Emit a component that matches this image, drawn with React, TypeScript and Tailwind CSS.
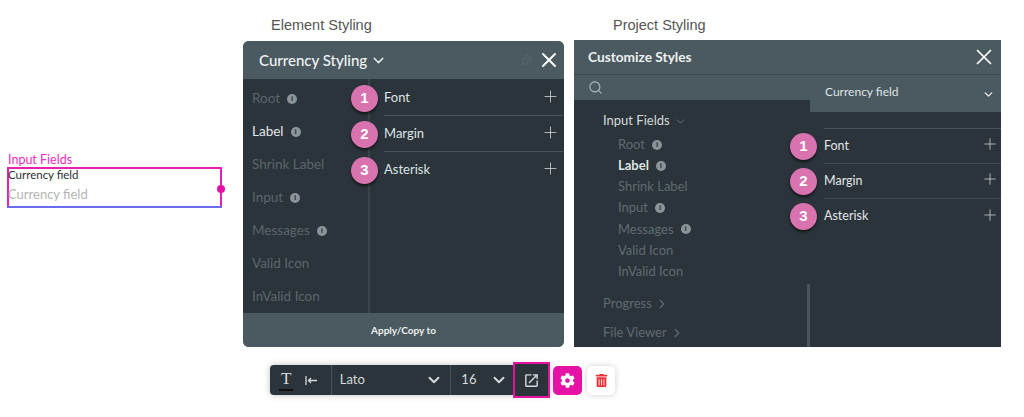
import { ChevronDown, ChevronRight, Plus, Search, X, Pin } from "lucide-react";
import { FaCog, FaTrashAlt } from "react-icons/fa";
import { MdOpenInNew } from "react-icons/md";

const lato = "font-['Lato','Noto_Sans',sans-serif]";

function Info() {
  return (
    <span className="ml-[7px] inline-flex h-[10px] w-[10px] items-center justify-center rounded-full bg-[#8a9499] font-['Liberation_Sans',sans-serif] text-[8px] font-bold leading-none text-[#2a343a]">
      i
    </span>
  );
}

function Badge({ n }: { n: number }) {
  return (
    <span className="flex h-[27px] w-[27px] shrink-0 items-center justify-center rounded-full bg-[#d873b0] font-['Liberation_Sans',sans-serif] text-[15px] font-bold text-white shadow-[0_2px_3px_rgba(0,0,0,0.6)]">
      {n}
    </span>
  );
}

function StyleRow({ n, label, border }: { n: number; label: string; border: boolean }) {
  return (
    <div className="flex h-[36px] items-center">
      <div className="z-10 -ml-[33px] mr-[6px]">
        <Badge n={n} />
      </div>
      <div className={`flex h-full flex-1 items-center justify-between pr-[4px] text-[13px] text-[#dfe3e5] ${border ? "border-b border-[#47545a]" : ""}`}>
        <span>{label}</span>
        <Plus size={19} strokeWidth={1} className="-mt-[3px] text-[#d5dadc]" />
      </div>
    </div>
  );
}

const sections = [
  { name: "Root", info: true },
  { name: "Label", info: true, active: true },
  { name: "Shrink Label" },
  { name: "Input", info: true },
  { name: "Messages", info: true },
  { name: "Valid Icon" },
  { name: "InValid Icon" },
];

function ElementPanel() {
  return (
    <div className="flex h-[306px] w-[321px] flex-col overflow-hidden rounded-[6px] bg-[#2a343a]">
      <div className="flex h-[38px] shrink-0 items-center bg-[#4a5a60] pl-[16px] pr-[3px] text-white">
        <span className="text-[15px] font-medium text-[#f2f4f5]">Currency Styling</span>
        <ChevronDown size={17} strokeWidth={2} className="ml-[3px] text-[#e6e9ea]" />
        <Pin size={13} strokeWidth={1.2} className="ml-auto mr-[5px] rotate-45 text-[#66757b]" />
        <X size={24} strokeWidth={2} className="text-white" />
      </div>
      <div className="flex flex-1">
        <div className="flex w-[127px] flex-col border-r-2 border-[#38444a] pl-[9px] pt-[3px]">
          {sections.map((item) => (
            <div
              key={item.name}
              className={`flex h-[33px] items-center text-[13.5px] ${item.active ? "text-[#e3e6e8]" : "text-[#5a666c]"}`}
            >
              {item.name}
              {item.info && <Info />}
            </div>
          ))}
        </div>
        <div className="flex-1 pl-[14px] pt-[1px]">
          <StyleRow n={1} label="Font" border />
          <StyleRow n={2} label="Margin" border />
          <StyleRow n={3} label="Asterisk" border={false} />
        </div>
      </div>
      <div className="flex h-[34px] shrink-0 items-center justify-center bg-[#4a5a60] text-[10px] font-bold text-[#eef0f1]">
        Apply/Copy to
      </div>
    </div>
  );
}

function ProjectRow({ n, label, last }: { n: number; label: string; last?: boolean }) {
  return (
    <div className="flex h-[35px] items-center">
      <div className="z-10 -ml-[34px] mr-[7px]">
        <Badge n={n} />
      </div>
      <div className={`flex h-full flex-1 items-center justify-between pr-[2px] text-[12.5px] text-[#e3e6e8] ${last ? "" : "border-b border-[#3f4b51]"}`}>
        <span>{label}</span>
        <Plus size={18} strokeWidth={1} className="-mt-[4px] text-[#d5dadc]" />
      </div>
    </div>
  );
}

function ProjectPanel() {
  return (
    <div className="flex h-[307px] w-[427px] flex-col overflow-hidden bg-[#2a343a]">
      <div className="flex h-[35px] shrink-0 items-center justify-between border-b border-[#3d4a50] bg-[#4a5a60] pl-[14px] pr-[4px]">
        <span className="text-[13.7px] font-bold text-[#eef0f1]">Customize Styles</span>
        <X size={26} strokeWidth={1.6} className="text-white" />
      </div>
      <div className="flex flex-1">
        <div className="flex w-[236px] flex-col">
          <div className="flex h-[25px] shrink-0 items-center bg-[#4a5a60] pl-[14px]">
            <Search size={15} strokeWidth={1.7} className="text-[#b4bcc0]" />
          </div>
          <div className="flex flex-1">
            <div className="flex-1 pl-[29px] pt-[10px]">
              <div className="flex h-[22px] items-center text-[13px] text-[#d4d9db]">
                Input Fields
                <ChevronDown size={13} strokeWidth={1.2} className="ml-[4px] text-[#8b969a]" />
              </div>
              <div className="pl-[15px] pt-[2px]">
                {sections.map((item) => (
                  <div
                    key={item.name}
                    className={`flex h-[21.2px] items-center text-[13px] ${item.active ? "font-bold text-[#dfe3e5]" : "text-[#5f6b71]"}`}
                  >
                    {item.name}
                    {item.info && <Info />}
                  </div>
                ))}
              </div>
              <div className="mt-[7px] flex h-[29px] items-center text-[13px] text-[#5f6b71]">
                Progress
                <ChevronRight size={14} strokeWidth={2.2} className="ml-[3px]" />
              </div>
              <div className="flex h-[29px] items-center text-[13px] text-[#5f6b71]">
                File Viewer
                <ChevronRight size={14} strokeWidth={2.2} className="ml-[3px]" />
              </div>
            </div>
            <div className="flex w-[3px] flex-col justify-end">
              <div className="h-[63px] w-[3px] bg-[#47545a]" />
            </div>
          </div>
        </div>
        <div className="flex flex-1 flex-col">
          <div className="flex h-[37px] shrink-0 items-center justify-between bg-[#4a5a60] pb-[3px] pl-[15px] pr-[6px] text-[12px] text-[#dfe3e5]">
            Currency field
            <ChevronDown size={13} strokeWidth={2.6} className="mt-[4px] text-[#e6e9ea]" />
          </div>
          <div className="ml-[14px] mt-[16px] border-t border-[#47545a]">
            <ProjectRow n={1} label="Font" />
            <ProjectRow n={2} label="Margin" />
            <ProjectRow n={3} label="Asterisk" last />
          </div>
        </div>
      </div>
    </div>
  );
}

function Toolbar() {
  return (
    <div className="flex w-max items-center">
      <div className="flex h-[30px] w-[280px] items-center rounded-[4px] bg-[#2a343a] text-[#d5dadc] shadow-[0_0_6px_rgba(0,0,0,0.25)]">
        <div className="flex h-full w-[62px] items-center border-r border-[#47545a] pl-[9px]">
          <span className="border-b-2 border-[#111] px-[2px] font-['Liberation_Serif',serif] text-[17px] leading-[20px] text-[#d5dadc]">T</span>
          <svg width="13" height="11" viewBox="0 0 13 11" className="ml-[12px]" fill="none" stroke="#d5dadc" strokeWidth="1.3">
            <path d="M1 1v9M12 5.5H3.5M6 3 3.5 5.5 6 8" />
          </svg>
        </div>
        <div className="flex h-full w-[120px] items-center justify-between border-r border-[#47545a] pl-[8px] pr-[7px] text-[13px]">
          Lato
          <ChevronDown size={18} strokeWidth={2.6} />
        </div>
        <div className="flex h-full w-[62px] items-center justify-between pl-[10px] pr-[5px] text-[13px]">
          16
          <ChevronDown size={18} strokeWidth={2.6} />
        </div>
        <div className="flex h-[36px] w-[37px] items-center justify-center border-[2px] border-[#e5139f] bg-[#2a343a]">
          <MdOpenInNew size={17} />
        </div>
      </div>
      <div className="ml-[3px] flex h-[29px] w-[29px] items-center justify-center rounded-[5px] bg-[#e512a5]">
        <FaCog size={15} className="text-white" />
      </div>
      <div className="ml-[5px] flex h-[29px] w-[28px] items-center justify-center rounded-[5px] bg-white shadow-[0_0_6px_rgba(0,0,0,0.2)]">
        <FaTrashAlt size={13} className="text-[#e8343a]" />
      </div>
    </div>
  );
}

export default function App() {
  return (
    <div className={`flex h-[417px] w-[1024px] overflow-hidden bg-white ${lato}`}>
      <div className="w-[243px] shrink-0 pl-[7px] pt-[153px]">
        <div className="pl-[1px] text-[12.5px] leading-[14px] text-[#f02cc0]">Input Fields</div>
        <div className="relative h-[41px] w-[215px] border-2 border-b-0 border-[#e91fb0]">
          <div className="-ml-[1px] -mt-[1px] text-[11.5px] leading-[14px] text-[#2a2f33]">Currency field</div>
          <div className="-ml-[1px] mt-[4px] text-[13px] leading-[16px] text-[#b4b4b4]">Currency field</div>
          <div className="absolute bottom-0 left-[-2px] right-[-2px] h-[2px] bg-[#6a6cf0]" />
          <div className="absolute right-[-5px] top-[16px] h-[8px] w-[8px] rounded-full bg-[#e512a5]" />
        </div>
      </div>
      <div className="w-[331px] shrink-0">
        <div className="pl-[28px] pt-[17px] font-['Liberation_Sans',sans-serif] text-[14.5px] leading-[17px] text-[#555]">
          Element Styling
        </div>
        <div className="mt-[7px]">
          <ElementPanel />
        </div>
        <div className="ml-[27px] mt-[18px]">
          <Toolbar />
        </div>
      </div>
      <div className="shrink-0">
        <div className="pl-[39px] pt-[17px] font-['Liberation_Sans',sans-serif] text-[14.5px] leading-[17px] text-[#555]">
          Project Styling
        </div>
        <div className="mt-[6px]">
          <ProjectPanel />
        </div>
      </div>
    </div>
  );
}
